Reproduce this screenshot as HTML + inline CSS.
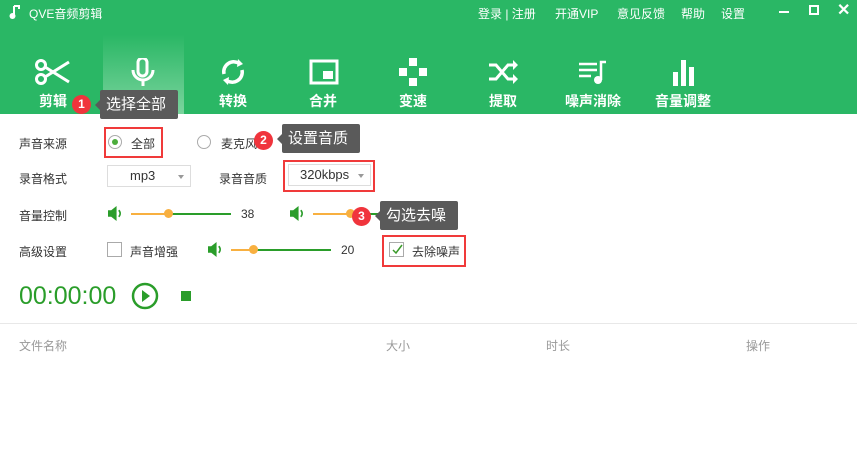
<!DOCTYPE html><html><head><meta charset="utf-8"><style>
*{margin:0;padding:0;box-sizing:border-box}
body{width:857px;height:471px;overflow:hidden;background:#fff;font-family:"Liberation Sans","Noto Sans CJK SC",sans-serif;position:relative;font-size:12px;color:#333}
.a{position:absolute;white-space:nowrap}
.hdr{position:absolute;left:0;top:0;width:857px;height:114px;background:#2ab765}
.w{color:#fff}
.tab{position:absolute;top:58px;width:80px;text-align:center;color:#fff;font-weight:bold;font-size:14px}
.tab svg{display:block;margin:0 auto 5px}
.lbl{position:absolute;left:19px;font-size:12px;color:#333}
.red{position:absolute;border:2px solid #f03a3a}
.tip{position:absolute;background:#5a5a5a;color:#fff;font-size:15px;padding:0 6px;line-height:29px;border-radius:2px}
.bad{position:absolute;width:19px;height:19px;border-radius:50%;background:#f0343c;color:#fff;font-size:12px;font-weight:bold;text-align:center;line-height:19px}
.sel{position:absolute;border:1px solid #ddd;height:22px;font-size:13px;line-height:20px}
.sel:after{content:"";position:absolute;right:6px;top:9px;border:3px solid transparent;border-top:4px solid #999}
.track{position:absolute;height:2px;background:#2a9d2a}
.track i{position:absolute;left:0;top:0;height:2px;background:#f8b040}
.track b{position:absolute;top:-4px;width:9px;height:9px;border-radius:50%;background:#f8b040}
.spk{position:absolute}
</style></head><body>
<div class="hdr"></div>
<div style="position:absolute;left:103px;top:35px;width:81px;height:79px;background:linear-gradient(#2ab765,#7bd49e)"></div>
<svg class="a" style="left:9px;top:4px" width="12" height="16" viewBox="0 0 12 16"><path d="M5 2v9" stroke="#fff" stroke-width="2"/><path d="M5 2h5v3" stroke="#fff" stroke-width="2" fill="none"/><circle cx="3.5" cy="12" r="3" fill="#fff"/></svg>
<div class="a w" style="left:29px;top:5px;font-size:12px">QVE音频剪辑</div>
<div class="a w" style="left:478px;top:5px">登录 | 注册</div>
<div class="a w" style="left:555px;top:5px">开通VIP</div>
<div class="a w" style="left:617px;top:5px">意见反馈</div>
<div class="a w" style="left:681px;top:5px">帮助</div>
<div class="a w" style="left:721px;top:5px">设置</div>
<div class="a" style="left:779px;top:11px;width:10px;height:2px;background:#fff"></div>
<div class="a" style="left:809px;top:5px;width:10px;height:10px;border:2px solid #fff"></div>
<div class="a w" style="left:837px;top:0px;font-size:16px;font-weight:bold">✕</div>

<div class="tab" style="left:13px"><svg width="36" height="28" viewBox="0 0 36 28"><circle cx="6" cy="7" r="4.5" stroke="#fff" stroke-width="3" fill="none"/><circle cx="6" cy="21" r="4.5" stroke="#fff" stroke-width="3" fill="none"/><path d="M10 9L34 24M10 19L34 4" stroke="#fff" stroke-width="3"/></svg>剪辑</div>
<div class="tab" style="left:103px"><svg width="36" height="28" viewBox="0 0 36 28"><rect x="13" y="0" width="9" height="18" rx="4.5" fill="none" stroke="#fff" stroke-width="3"/><path d="M8 12a10 10 0 0 0 20 0M18 22v6" stroke="#fff" stroke-width="3" fill="none"/></svg>录音</div>
<div class="tab" style="left:193px"><svg width="36" height="28" viewBox="0 0 36 28"><path d="M9 16a10 10 0 0 1 16-10M27 12a10 10 0 0 1-16 10" stroke="#fff" stroke-width="3.5" fill="none"/><path d="M23 1l5 5-6 3zM13 27l-5-5 6-3z" fill="#fff"/></svg>转换</div>
<div class="tab" style="left:283px"><svg width="36" height="28" viewBox="0 0 36 28"><rect x="6" y="3" width="26" height="22" stroke="#fff" stroke-width="3" fill="none"/><rect x="18" y="13" width="10" height="8" fill="#fff"/></svg>合并</div>
<div class="tab" style="left:373px"><svg width="36" height="28" viewBox="0 0 36 28"><rect x="14" y="0" width="8" height="8" fill="#fff"/><rect x="14" y="20" width="8" height="8" fill="#fff"/><rect x="4" y="10" width="8" height="8" fill="#fff"/><rect x="24" y="10" width="8" height="8" fill="#fff"/></svg>变速</div>
<div class="tab" style="left:463px"><svg width="36" height="28" viewBox="0 0 36 28"><path d="M4 7h7l12 14h6M4 21h7l12-14h6" stroke="#fff" stroke-width="3" fill="none"/><path d="M28 2l5 5-5 5zM28 16l5 5-5 5z" fill="#fff"/></svg>提取</div>
<div class="tab" style="left:553px"><svg width="36" height="28" viewBox="0 0 36 28"><path d="M4 6h18M4 12h18M4 18h12" stroke="#fff" stroke-width="2.5"/><path d="M26 22V4h5" stroke="#fff" stroke-width="2.5" fill="none"/><circle cx="23" cy="22" r="4" fill="#fff"/></svg>噪声消除</div>
<div class="tab" style="left:643px"><svg width="36" height="28" viewBox="0 0 36 28"><rect x="8" y="14" width="5" height="14" fill="#fff"/><rect x="16" y="2" width="5" height="26" fill="#fff"/><rect x="24" y="9" width="5" height="19" fill="#fff"/></svg>音量调整</div>

<div class="lbl" style="top:135px">声音来源</div>
<div class="a" style="left:108px;top:135px;width:14px;height:14px;border:1px solid #aaa;border-radius:50%"></div>
<div class="a" style="left:112px;top:139px;width:6px;height:6px;background:#4cad3c;border-radius:50%"></div>
<div class="a" style="left:131px;top:135px">全部</div>
<div class="a" style="left:197px;top:135px;width:14px;height:14px;border:1px solid #aaa;border-radius:50%"></div>
<div class="a" style="left:221px;top:135px">麦克风</div>
<div class="a" style="left:345px;top:135px">音</div>
<div class="red" style="left:104px;top:127px;width:59px;height:31px"></div>

<div class="lbl" style="top:170px">录音格式</div>
<div class="sel" style="left:107px;top:165px;width:84px;padding-left:22px">mp3</div>
<div class="a" style="left:219px;top:170px">录音音质</div>
<div class="sel" style="left:288px;top:164px;width:83px;padding-left:11px">320kbps</div>
<div class="red" style="left:283px;top:160px;width:92px;height:32px"></div>

<svg class="spk" style="left:108px;top:206px" width="15" height="15" viewBox="0 0 14 14"><path d="M0 4h3l5-4v14l-5-4H0z" fill="#2a9d2a"/><path d="M10 4a4 4 0 0 1 0 6" stroke="#2a9d2a" stroke-width="1.5" fill="none"/></svg>
<div class="lbl" style="top:207px">音量控制</div>
<div class="track" style="left:131px;top:213px;width:100px"><i style="width:38px"></i><b style="left:33px"></b></div>
<div class="a" style="left:241px;top:207px">38</div>
<svg class="spk" style="left:290px;top:206px" width="15" height="15" viewBox="0 0 14 14"><path d="M0 4h3l5-4v14l-5-4H0z" fill="#2a9d2a"/><path d="M10 4a4 4 0 0 1 0 6" stroke="#2a9d2a" stroke-width="1.5" fill="none"/></svg>
<div class="track" style="left:313px;top:213px;width:70px"><i style="width:38px"></i><b style="left:33px"></b></div>

<div class="lbl" style="top:243px">高级设置</div>
<div class="a" style="left:107px;top:242px;width:15px;height:15px;border:1px solid #aaa"></div>
<div class="a" style="left:130px;top:243px">声音增强</div>
<svg class="spk" style="left:208px;top:242px" width="15" height="15" viewBox="0 0 14 14"><path d="M0 4h3l5-4v14l-5-4H0z" fill="#2a9d2a"/><path d="M10 4a4 4 0 0 1 0 6" stroke="#2a9d2a" stroke-width="1.5" fill="none"/></svg>
<div class="track" style="left:231px;top:249px;width:100px"><i style="width:25px"></i><b style="left:18px"></b></div>
<div class="a" style="left:341px;top:243px">20</div>
<div class="a" style="left:389px;top:242px;width:15px;height:15px;border:1px solid #aaa"></div>
<svg class="a" style="left:391px;top:244px" width="12" height="12" viewBox="0 0 12 12"><path d="M2 6l3 3 6-8" stroke="#3a9a2a" stroke-width="1.5" fill="none"/></svg>
<div class="a" style="left:412px;top:243px">去除噪声</div>
<div class="red" style="left:382px;top:235px;width:84px;height:32px"></div>

<div class="a" style="left:19px;top:282px;font-size:25px;color:#2a9d2a">00:00:00</div>
<svg class="a" style="left:131px;top:282px" width="28" height="28" viewBox="0 0 28 28"><circle cx="14" cy="14" r="12" stroke="#2a9d2a" stroke-width="2.5" fill="none"/><path d="M11 8l8 6-8 6z" fill="#2a9d2a"/></svg>
<div class="a" style="left:181px;top:291px;width:10px;height:10px;background:#2a9d2a"></div>

<div class="a" style="left:0;top:323px;width:857px;height:1px;background:#e8e8e8"></div>
<div class="a" style="left:19px;top:337px;color:#999">文件名称</div>
<div class="a" style="left:386px;top:337px;color:#999">大小</div>
<div class="a" style="left:546px;top:337px;color:#999">时长</div>
<div class="a" style="left:746px;top:337px;color:#999">操作</div>

<div class="tip" style="left:100px;top:90px;width:78px">选择全部</div>
<div class="a" style="left:95px;top:100px;border:5px solid transparent;border-right:5px solid #5a5a5a;border-left:0"></div>
<div class="bad" style="left:72px;top:95px">1</div>
<div class="tip" style="left:282px;top:124px;width:78px">设置音质</div>
<div class="a" style="left:277px;top:134px;border:5px solid transparent;border-right:5px solid #5a5a5a;border-left:0"></div>
<div class="bad" style="left:254px;top:131px">2</div>
<div class="tip" style="left:380px;top:201px;width:78px">勾选去噪</div>
<div class="a" style="left:375px;top:211px;border:5px solid transparent;border-right:5px solid #5a5a5a;border-left:0"></div>
<div class="bad" style="left:352px;top:207px">3</div>
</body></html>
